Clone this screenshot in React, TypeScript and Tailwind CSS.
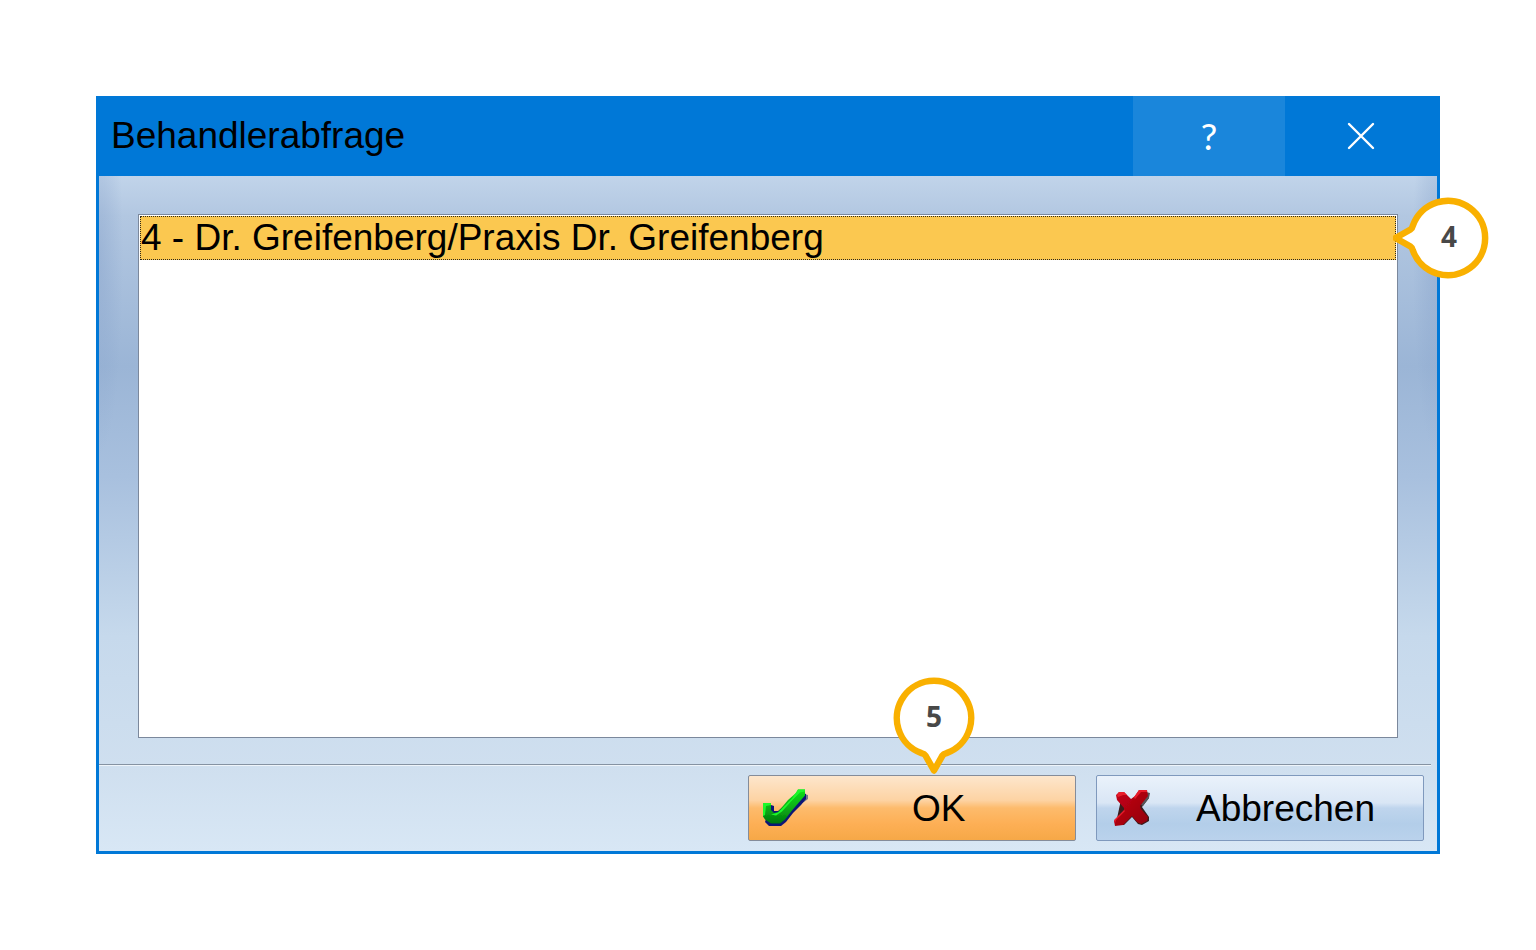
import React, { useState } from "react";

const entries = ["4 - Dr. Greifenberg/Praxis Dr. Greifenberg"];

function CheckIcon() {
  return (
    <svg className="h-10 w-12 shrink-0" viewBox="0 0 48 40" aria-hidden="true">
      <defs>
        <linearGradient id="check-green" x1="0" y1="0" x2="0" y2="1">
          <stop offset="0" stopColor="#0ae014" />
          <stop offset="0.45" stopColor="#0fb818" />
          <stop offset="1" stopColor="#00780c" />
        </linearGradient>
        <filter id="check-soft" x="-10%" y="-10%" width="120%" height="120%">
          <feGaussianBlur stdDeviation="0.6" />
        </filter>
      </defs>
      <g filter="url(#check-soft)">
        <path d="M42 6l4 1v4l-4 3-4 2z" fill="#77778c" />
        <path
          d="M9 17l3 1v5l4 0 22-19 6 2v5l-5 6-8 8-7 9-5 4H7l-4-4 2-6z"
          fill="#0a1674"
        />
        <path
          d="M1 15h8v7l3 3 4-1L26 12 34 5 36 1.500h7v6l-7 8-6 7-7 9-5 4H9l-6-4-2-3z"
          fill="url(#check-green)"
        />
        <path d="M1 15h8v2l-5 1-1 9-2 1zM36 1.500h7v2l-5 1-9 9-9 10-6 4-5-1 7-2 7-7 7-7z" fill="#1cf82a" />
      </g>
    </svg>
  );
}

function CrossIcon() {
  return (
    <svg className="h-10 w-10 shrink-0" viewBox="0 0 40 40" aria-hidden="true">
      <defs>
        <linearGradient id="cross-red" x1="0" y1="0" x2="1" y2="1">
          <stop offset="0" stopColor="#c80818" />
          <stop offset="0.5" stopColor="#ac0010" />
          <stop offset="1" stopColor="#900008" />
        </linearGradient>
        <filter id="cross-soft" x="-10%" y="-10%" width="120%" height="120%">
          <feGaussianBlur stdDeviation="0.6" />
        </filter>
      </defs>
      <g filter="url(#cross-soft)">
        <path
          d="M10 7h4l7 7 9-9 7 0v5l-7 9 7 10v4l-7 4-4-1-6-7-8 8H7l-3-2z"
          fill="#3a1a1c"
        />
        <path d="M34 4l4 1-1 5-6 8-2-1z" fill="#55555a" />
        <path
          d="M4 7l3-3h5l3 3 4 4 4-3 4-6h8l1 6-8 10 1 3 7 8-1 4-6 3-4-2-5-6-9 9-8 1-1-5 10-10v-3l-7-8z"
          fill="url(#cross-red)"
        />
        <path d="M5 7l2-3h5l3 3h-4l-5 2zM22 9l5-7h8v2h-6l-6 7zM2 32l10-10 1 1-9 9-1 3z" fill="#e81c2c" />
      </g>
    </svg>
  );
}

function CloseIcon() {
  return (
    <svg className="h-7 w-7" viewBox="0 0 28 28" fill="none" stroke="#ffffff" strokeWidth="2.4" strokeLinecap="round" aria-hidden="true">
      <path d="M2 2l24 24M26 2L2 26" />
    </svg>
  );
}

const marker =
  "M29.500 76.100A37.200 37.200 0 1 1 54.500 76.100Q51.500 76.800 50.500 78.500L42 93.500L33.500 78.500Q32.500 76.800 29.500 76.100z";

export default function App() {
  const [selected, setSelected] = useState(0);

  return (
    <main className="flex min-h-screen bg-white p-24 font-['Liberation_Sans',Arial,sans-serif] text-black">
      <section
        role="dialog"
        aria-labelledby="dialog-title"
        className="flex flex-1 flex-col border-x-3 border-b-3 border-[#0078d7]"
      >
        <header className="flex h-20 shrink-0 items-stretch bg-[#0078d7]">
          <h1 id="dialog-title" className="flex-1 self-center pl-3 text-[37px] leading-10">
            Behandlerabfrage
          </h1>
          <button
            type="button"
            aria-label="Hilfe"
            className="w-38 bg-[#1a86db] font-[Lato,sans-serif] text-[37px] leading-10 text-white"
          >
            ?
          </button>
          <button type="button" aria-label="Schließen" className="flex w-38 items-center justify-center">
            <CloseIcon />
          </button>
        </header>

        <div className="flex flex-1 flex-col bg-[radial-gradient(24px_200px_at_0_80px,rgba(130,158,200,0.4),transparent),radial-gradient(24px_200px_at_100%_80px,rgba(130,158,200,0.4),transparent),linear-gradient(180deg,#c1d4ea_0px,#b2c7e1_40px,#9bb5d6_190px,#a8c0de_300px,#c6d9ec_460px,#cfdfef_590px,#d8e7f5_100%)]">
          <div className="relative mx-[39px] mt-[38px] mb-[26px] flex flex-1 flex-col border border-[#7b889c] bg-white p-px">
            <ul role="listbox" aria-label="Behandler" className="flex-1">
              {entries.map((entry, index) => (
                <li
                  key={entry}
                  role="option"
                  aria-selected={selected === index}
                  tabIndex={0}
                  onClick={() => setSelected(index)}
                  className="border border-dotted border-[#2f2a1c] bg-[#fbc850] text-[37px] leading-[42px]"
                >
                  {entry}
                </li>
              ))}
            </ul>
            <div className="absolute -top-[19px] -right-[92px] flex h-[84px] w-24 items-center">
              <svg className="absolute inset-0 h-full w-full" viewBox="0 0 96 84" aria-hidden="true">
                <path d={marker} transform="matrix(0 1 -1 0 96 0)" fill="#ffffff" stroke="#f9b000" strokeWidth="6.500" strokeLinejoin="round" />
              </svg>
              <span className="relative ml-auto w-20 pb-1 text-center font-[Noto_Sans] text-[28px] leading-8 font-bold text-[#484848]">
                4
              </span>
            </div>
          </div>

          <footer className="flex flex-col">
            <div className="mr-1.5 h-0.5 border-t border-[#8592a2] bg-[#eef4fa]" />
            <div className="flex justify-end gap-5 px-[13px] pt-[9px] pb-2.5">
              <button
                type="button"
                className="relative flex h-[66px] w-[328px] items-center rounded-xs border border-[#848c9a] bg-[linear-gradient(180deg,#fde6cc_0%,#fdd3a3_38%,#fdbb6c_50%,#fdaf55_75%,#f6a847_100%)] pl-[13px] text-[37px] leading-10"
              >
                <CheckIcon />
                <span className="flex-1 pt-0.5 pl-[102px] text-left">OK</span>
                <span className="absolute -top-[99px] left-[143px] flex h-24 w-[84px] justify-center pt-[23px]">
                  <svg className="absolute inset-0 h-full w-full overflow-visible" viewBox="0 0 84 96" aria-hidden="true">
                    <path d={marker} fill="#ffffff" stroke="#f9b000" strokeWidth="6.500" strokeLinejoin="round" />
                  </svg>
                  <span className="relative font-[Noto_Sans] text-[28px] leading-8 font-bold text-[#484848]">
                    5
                  </span>
                </span>
              </button>
              <button
                type="button"
                className="flex h-[66px] w-[328px] items-center rounded-xs border border-[#7f99bd] bg-[linear-gradient(180deg,#eaf2fb_0%,#d9e6f5_42%,#bfd5ed_50%,#b3cee9_75%,#bad2ec_100%)] pl-[15px] text-[37px] leading-10"
              >
                <CrossIcon />
                <span className="flex-1 pt-0.5 pl-[44px] text-left">Abbrechen</span>
              </button>
            </div>
          </footer>
        </div>
      </section>
    </main>
  );
}
